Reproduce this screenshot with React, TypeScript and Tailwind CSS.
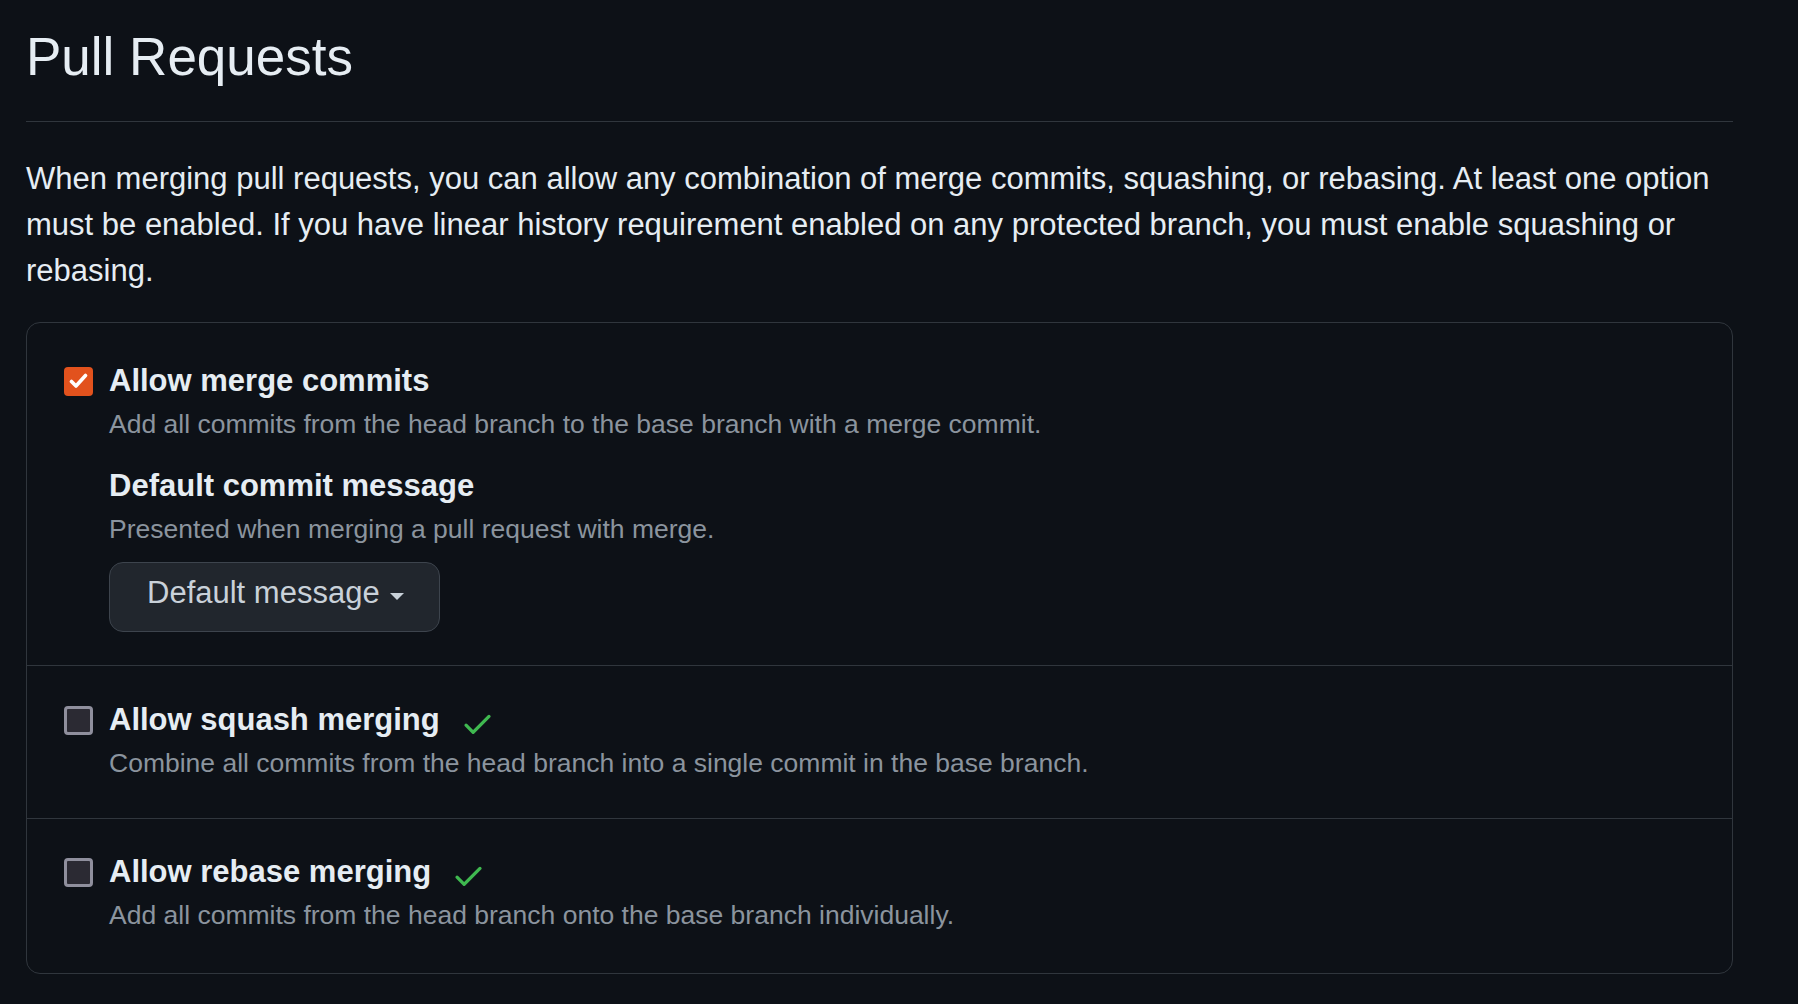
import React from "react";

const font = { fontFamily: '"Liberation Sans", Arial, sans-serif' };

function Checkbox({ checked }: { checked?: boolean }) {
  if (checked) {
    return (
      <span className="flex h-[29px] w-[29px] shrink-0 items-center justify-center rounded-[4px] bg-[#e2521d]">
        <svg width="19" height="16" viewBox="0 0 19 16" fill="none">
          <path d="M2.5 8.5 L7 13 L16.5 2.5" stroke="#fff" strokeWidth="3.6" strokeLinecap="round" strokeLinejoin="round" />
        </svg>
      </span>
    );
  }
  return <span className="h-[29px] w-[29px] shrink-0 rounded-[4px] border-[3px] border-[#8f8f9d] bg-[#2b2a33]" />;
}

function Check() {
  return (
    <svg width="35" height="35" viewBox="0 0 16 16" fill="#3fb950" className="ml-[20px] mt-[6px] shrink-0">
      <path d="M13.78 4.22a.75.75 0 0 1 0 1.06l-7.25 7.25a.75.75 0 0 1-1.06 0L2.22 9.28a.751.751 0 0 1 .018-1.042.751.751 0 0 1 1.042-.018L6 10.94l6.72-6.72a.75.75 0 0 1 1.06 0Z" />
    </svg>
  );
}

function Option({
  label,
  note,
  checked,
  ok,
  className,
  children,
}: {
  label: string;
  note: string;
  checked?: boolean;
  ok?: boolean;
  className: string;
  children?: React.ReactNode;
}) {
  return (
    <div className={`flex pl-[37px] pr-[36px] ${className}`}>
      <div className="flex h-[46px] items-center">
        <Checkbox checked={checked} />
      </div>
      <div className="ml-[16px] flex flex-col">
        <div className="flex h-[46px] items-center">
          <span className="text-[31px] font-bold leading-[46px] text-[#e6edf3]">{label}</span>
          {ok && <Check />}
        </div>
        <p className="text-[26.5px] leading-[40px] text-[#8b949e]">{note}</p>
        {children}
      </div>
    </div>
  );
}

export default function App() {
  return (
    <div className="min-h-screen w-full bg-[#0d1117]" style={font}>
      <div className="ml-[26px] w-[1707px]">
        {/* heading */}
        <div className="border-b border-[#30363d] pb-[31px] pt-[24px]">
          <h2 className="text-[53px] font-normal leading-[66px] text-[#e6edf3]">Pull Requests</h2>
        </div>

        <p className="mt-[34px] text-[31px] leading-[46px] text-[#e6edf3]">
          When merging pull requests, you can allow any combination of merge commits, squashing, or rebasing. At least
          one option must be enabled. If you have linear history requirement enabled on any protected branch, you must
          enable squashing or rebasing.
        </p>

        <div className="mt-[28px] rounded-[14px] border border-[#30363d]">
          <Option
            checked
            label="Allow merge commits"
            note="Add all commits from the head branch to the base branch with a merge commit."
            className="border-b border-[#30363d] pb-[33px] pt-[35px]"
          >
            <div className="mt-[19px] text-[31px] font-bold leading-[46px] text-[#e6edf3]">Default commit message</div>
            <p className="text-[26.5px] leading-[40px] text-[#8b949e]">Presented when merging a pull request with merge.</p>
            <div className="mt-[13px]">
              <button className="flex h-[70px] items-center rounded-[14px] border border-[#3d444d] bg-[#21262d] pb-[7px] pl-[37px] pr-[35px] text-[31px] text-[#c9d1d9]">
                Default message
                <span className="ml-[10px] mt-[5px] h-0 w-0 border-x-[7.5px] border-t-[7px] border-x-transparent border-t-[#c9d1d9]" />
              </button>
            </div>
          </Option>
          <Option
            ok
            label="Allow squash merging"
            note="Combine all commits from the head branch into a single commit in the base branch."
            className="border-b border-[#30363d] pb-[35px] pt-[31px]"
          />
          <Option
            ok
            label="Allow rebase merging"
            note="Add all commits from the head branch onto the base branch individually."
            className="pb-[38px] pt-[30px]"
          />
        </div>
      </div>
    </div>
  );
}
